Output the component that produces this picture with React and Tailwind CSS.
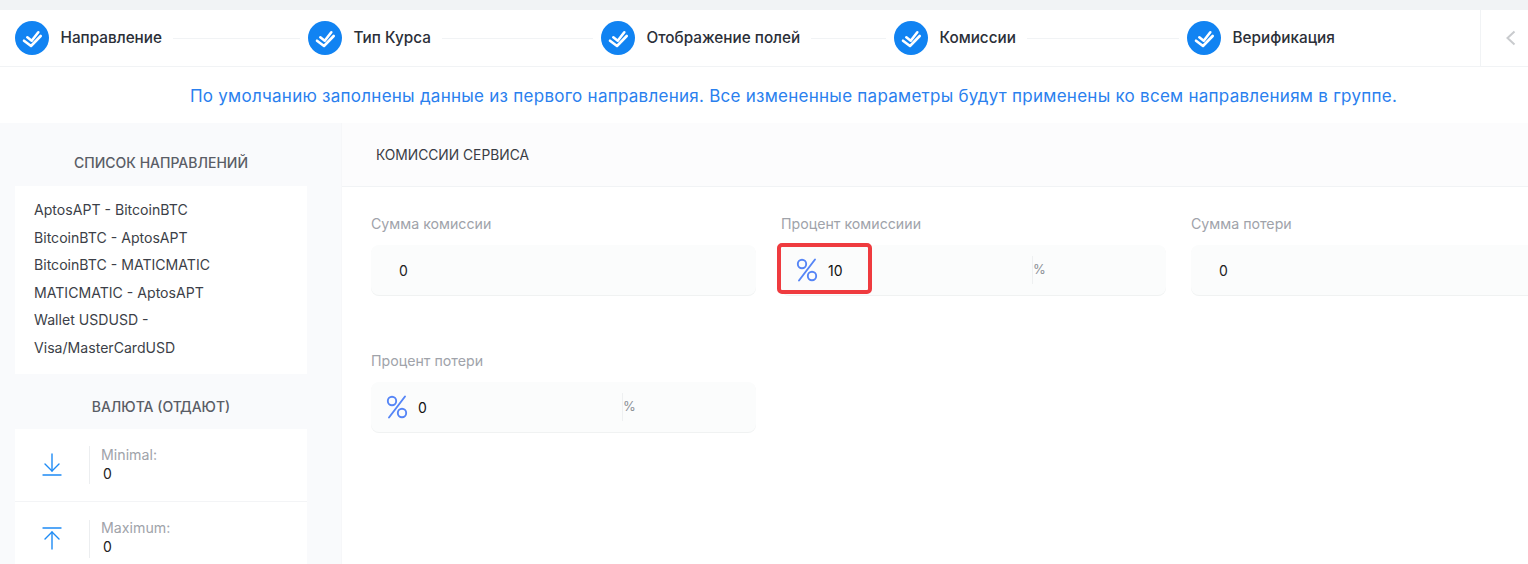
const FONT = "font-['Inter','Noto_Sans',sans-serif]";

function CheckCircle() {
  return (
    <svg width="34" height="34" viewBox="0 0 34 34" className="shrink-0">
      <circle cx="17" cy="17" r="17" fill="#1183f2" />
      <path d="M12.3 16.3 L16.7 19.7 L23.3 11.3" fill="none" stroke="#fff" strokeWidth="2.6" strokeLinecap="round" strokeLinejoin="round" />
      <path d="M9 19.7 L16 25 L25.7 15" fill="none" stroke="#fff" strokeWidth="2.6" strokeLinecap="round" strokeLinejoin="round" />
    </svg>
  );
}

function Step({ label, line }) {
  return (
    <div className="flex w-[293px] shrink-0 items-center">
      <CheckCircle />
      <span className="ml-[11.5px] mt-[1px] whitespace-nowrap text-[15.3px] font-medium text-[#2b2f38]">{label}</span>
      {line && <div className="ml-[11px] mr-2 h-px flex-1 bg-[#f1f3f5]" />}
    </div>
  );
}

function PercentIcon({ className }) {
  return (
    <svg width="22" height="26" viewBox="0 0 22 26" className={className}>
      <g fill="none" stroke="#5585f6" strokeWidth="1.9">
        <circle cx="6" cy="7" r="4.2" />
        <circle cx="16" cy="19" r="4.2" />
        <path d="M19 2.5 L3 23.5" strokeLinecap="round" />
      </g>
    </svg>
  );
}

function Field({ label, value, percent, highlight }) {
  return (
    <div className="w-[385px] shrink-0">
      <div className="mb-[12px] h-[17px] text-[14.2px] leading-[16px] text-[#a0a3aa]">{label}</div>
      <div className="relative flex h-[50px] items-center rounded-lg bg-[#fbfcfc] shadow-[0_1px_0_#f0f2f2]">
        {percent ? (
          <>
            <PercentIcon className="ml-[15px] shrink-0" />
            <span className="ml-[10px] w-[204px] text-[14px] text-[#111]">{value}</span>
            <div className="h-[28px] w-px bg-[#eef0f1]" />
            <span className="text-[13px] text-[#8c9096]">%</span>
          </>
        ) : (
          <span className="ml-[28px] text-[14px] text-[#222]">{value}</span>
        )}
        {highlight && (
          <div className="absolute -top-[2px] -left-[4px] h-[51px] w-[95px] rounded-[5px] border-4 border-[#ef3b3f]" />
        )}
      </div>
    </div>
  );
}

function LimitRow({ label, up, border }) {
  return (
    <div className={`flex h-[73px] items-center ${border ? "border-b border-[#f3f4f6]" : ""}`}>
      <div className="flex w-[74px] justify-center">
        <svg width="20" height="24" viewBox="0 0 20 24" fill="none" stroke="#1e8bf5" strokeWidth="1.4" strokeLinecap="round" strokeLinejoin="round" className={up ? "mb-[2px]" : ""}>
          {up ? (
            <>
              <path d="M1 2 H19" />
              <path d="M10 23 V6" />
              <path d="M3 13 L10 6 L17 13" />
            </>
          ) : (
            <>
              <path d="M1 22 H19" />
              <path d="M10 1 V18" />
              <path d="M3 11 L10 18 L17 11" />
            </>
          )}
        </svg>
      </div>
      <div className="flex h-[38px] flex-col justify-center border-l border-[#eceef0] pb-[2px] pl-[11px]">
        <div className="text-[14.2px] leading-[18px] text-[#a0a3aa]">{label}</div>
        <div className="ml-[2px] text-[14px] leading-[19px] text-[#222]">0</div>
      </div>
    </div>
  );
}

export default function App() {
  const routes = [
    "AptosAPT - BitcoinBTC",
    "BitcoinBTC - AptosAPT",
    "BitcoinBTC - MATICMATIC",
    "MATICMATIC - AptosAPT",
    "Wallet USDUSD -",
    "Visa/MasterCardUSD",
  ];
  return (
    <div className={`h-[564px] w-[1528px] overflow-hidden bg-white ${FONT}`}>
      <div className="h-[10px] bg-[#f1f3f5]" />
      <div className="flex h-[57px] border-b border-[#f1f3f5]">
        <div className="flex w-[1480px] items-center pl-[15px]">
          <Step label="Направление" line />
          <Step label="Тип Курса" line />
          <Step label="Отображение полей" line />
          <Step label="Комиссии" line />
          <Step label="Верификация" />
        </div>
        <div className="flex flex-1 items-center justify-center border-l border-[#f1f3f5] pl-[12px]">
          <svg width="12" height="16" viewBox="0 0 12 16" fill="none" stroke="#c9cbce" strokeWidth="2">
            <path d="M9.5 1.5 L2.5 8 L9.5 14.5" />
          </svg>
        </div>
      </div>
      <div className="flex h-[56px] items-center justify-center pl-[59px] pt-[3px] text-[17px] tracking-[0.26px] text-[#2a80ee]">
        По умолчанию заполнены данные из первого направления. Все измененные параметры будут применены ко всем направлениям в группе.
      </div>
      <div className="flex">
        <aside className="w-[342px] shrink-0 border-r border-[#f6f7f9] bg-[#f9fafc] px-[15px]">
          <h3 className="flex h-[63px] items-center justify-center pr-[19px] pt-[16px] text-[14px] font-medium text-[#5a5d66]">
            СПИСОК НАПРАВЛЕНИЙ
          </h3>
          <div className="w-[292px] bg-white px-[19px] pb-[13px] pt-[10px]">
            {routes.map((r) => (
              <div key={r} className="h-[27.5px] text-[14.1px] leading-[27.5px] text-[#3c3f48]">{r}</div>
            ))}
          </div>
          <h3 className="flex h-[55px] items-center justify-center pr-[19px] pt-[9px] text-[14px] font-medium text-[#5a5d66]">
            ВАЛЮТА (ОТДАЮТ)
          </h3>
          <div className="w-[292px] bg-white">
            <LimitRow label="Minimal:" border />
            <LimitRow label="Maximum:" up />
          </div>
        </aside>
        <main className="min-w-0 flex-1">
          <div className="flex h-[64px] items-center border-b border-[#f1f3f5] bg-[#fcfcfd] pl-[34px] pt-[2px] text-[13.8px] text-[#3a3d45]">
            КОМИССИИ СЕРВИСА
          </div>
          <div className="pl-[29px] pt-[29px]">
            <div className="flex gap-x-[25px]">
              <Field label="Сумма комиссии" value="0" />
              <Field label="Процент комиссиии" value="10" percent highlight />
              <Field label="Сумма потери" value="0" />
            </div>
            <div className="mt-[58px]">
              <Field label="Процент потери" value="0" percent />
            </div>
          </div>
        </main>
      </div>
    </div>
  );
}
